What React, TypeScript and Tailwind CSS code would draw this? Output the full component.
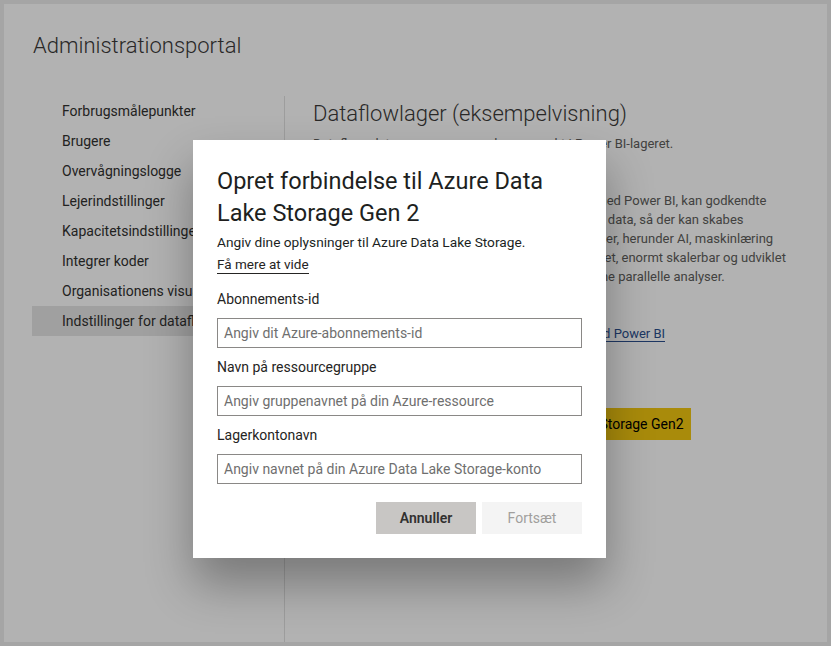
import React from "react";

const font = { fontFamily: 'Roboto, "Noto Sans", sans-serif' };

const navItems = [
  "Forbrugsmålepunkter",
  "Brugere",
  "Overvågningslogge",
  "Lejerindstillinger",
  "Kapacitetsindstillinger",
  "Integrer koder",
  "Organisationens visualiseringer",
  "Indstillinger for dataflow (eksempelvisning)",
];

function Field({ label, placeholder }: { label: string; placeholder: string }) {
  return (
    <div className="flex flex-col">
      <label className="text-[14px] leading-[18px] text-[#252423]">{label}</label>
      <div className="mt-[10px] h-[30px] border border-[#8a8886] flex items-center px-[6px]">
        <span className="text-[14px] text-[#6f6f6f] whitespace-nowrap">{placeholder}</span>
      </div>
    </div>
  );
}

export default function App() {
  return (
    <div className="relative w-[831px] h-[646px] overflow-hidden bg-[#ededed] p-[4px]" style={font}>
      <div className="w-full h-full bg-white flex flex-col">
        <div className="pl-[29px] pt-[24px] h-[92px]">
          <h1 className="text-[22px] leading-[36px] font-light text-[#3b3a39]">Administrationsportal</h1>
        </div>
        <div className="flex flex-1 pl-[28px]">
          <nav className="w-[253px] flex flex-col border-r border-[#e1e1e1] overflow-hidden">
            {navItems.map((item, i) => (
              <div
                key={item}
                className={
                  "h-[30px] flex items-center pl-[30px] text-[14px] text-[#323130] whitespace-nowrap " +
                  (i === navItems.length - 1 ? "bg-[#e6e6e6]" : "")
                }
              >
                {item}
              </div>
            ))}
          </nav>
          <main className="flex-1 pl-[28px] flex flex-col">
            <h2 className="text-[22px] leading-[36px] font-light text-[#3b3a39]">Dataflowlager (eksempelvisning)</h2>
            <p className="mt-[2px] text-[13px] leading-[19px] text-[#605e5c] whitespace-nowrap">
              Dataflowsdata gemmes som udgangspunkt i Power BI-lageret.
            </p>
            <div className="mt-[38px] text-[13px] leading-[19px] text-[#605e5c] whitespace-nowrap flex flex-col">
              <span>Ved at tilslutte en Azure Data Lake Storage Gen2 med Power BI, kan godkendte</span>
              <span>brugere fra Azure får direkte adgang til alle lagrede data, så der kan skabes</span>
              <span>yderligere værdi med nye avancerede Azure-tjenester, herunder AI, maskinlæring</span>
              <span>og så meget mere. Azure Data Lake Storage er sikret, enormt skalerbar og udviklet</span>
              <span>til at understøtte store datamængder samt ekstreme parallelle analyser.</span>
            </div>
            <div className="mt-[38px] text-[13px] leading-[19px] whitespace-nowrap">
              <span className="text-[#2b4f8f] border-b border-[#2b4f8f]">
                Få mere at vide om brug af dataflows sammen med Power BI
              </span>
            </div>
            <div className="mt-[65px]">
              <button className="h-[32px] pl-[8px] pr-[7px] bg-[#f2c811] text-[14px] text-black whitespace-nowrap">
                Opret forbindelse til din nye Azure Data Lake Storage Gen2
              </button>
            </div>
          </main>
        </div>
      </div>

      <div className="absolute inset-0 bg-black/30" />

      <div className="absolute left-[193px] top-[140px] w-[413px] h-[418px] bg-white shadow-[0_26px_44px_rgba(0,0,0,0.32)] px-[24px] pt-[25px]">
        <h3 className="text-[23.5px] leading-[32px] font-normal text-[#201f1e]">
          Opret forbindelse til Azure Data Lake Storage Gen 2
        </h3>
        <p className="mt-[3px] text-[13.7px] leading-[20px] text-[#201f1e]">
          Angiv dine oplysninger til Azure Data Lake Storage.
        </p>
        <span className="inline-block text-[13.5px] leading-[17px] text-[#252423] border-b border-[#252423]">
          Få mere at vide
        </span>
        <div className="mt-[14px] flex flex-col gap-[10px]">
          <Field label="Abonnements-id" placeholder="Angiv dit Azure-abonnements-id" />
          <Field label="Navn på ressourcegruppe" placeholder="Angiv gruppenavnet på din Azure-ressource" />
          <Field label="Lagerkontonavn" placeholder="Angiv navnet på din Azure Data Lake Storage-konto" />
        </div>
        <div className="mt-[18px] flex justify-end gap-[6px]">
          <button className="w-[100px] h-[32px] bg-[#c8c6c4] text-[14px] font-semibold text-[#323130]">Annuller</button>
          <button className="w-[100px] h-[32px] bg-[#f4f4f4] text-[14px] text-[#a19f9d]">Fortsæt</button>
        </div>
      </div>
    </div>
  );
}
